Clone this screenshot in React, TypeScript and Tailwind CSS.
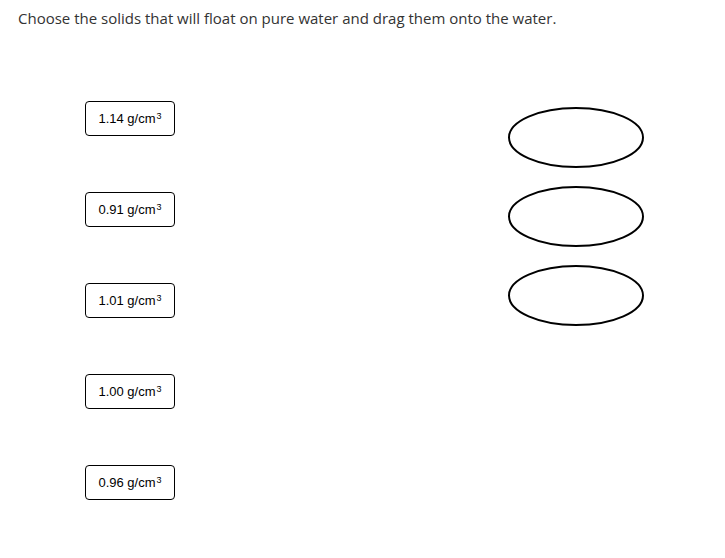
const densities = ['1.14', '0.91', '1.01', '1.00', '0.96']

function Water() {
  return (
    <svg width="138" height="63" viewBox="0 0 138 63" className="block">
      <ellipse cx="69" cy="31.5" rx="67" ry="29.5" fill="white" stroke="black" strokeWidth="2" />
    </svg>
  )
}

export default function App() {
  return (
    <div className="w-[725px] h-[558px] bg-white relative overflow-hidden">
      <p className="pl-[18px] pt-[8px] text-[15px] leading-5 text-[#333] font-['Open_Sans',sans-serif]">
        Choose the solids that will float on pure water and drag them onto the water.
      </p>
      <div className="flex pl-[85px] pt-[73px]">
        <div className="flex flex-col gap-[56px]">
          {densities.map((d) => (
            <div
              key={d}
              className="w-[90px] h-[35px] rounded-[4px] border border-black flex items-center justify-center text-[13px] text-black font-['Liberation_Sans',Arial,sans-serif]"
            >
              {d} g/cm<span className="text-[9px] leading-none self-start mt-[10px] ml-px">3</span>
            </div>
          ))}
        </div>
        <div className="ml-[332px] mt-[5px] flex flex-col gap-[16px]">
          <Water />
          <Water />
          <Water />
        </div>
      </div>
    </div>
  )
}
